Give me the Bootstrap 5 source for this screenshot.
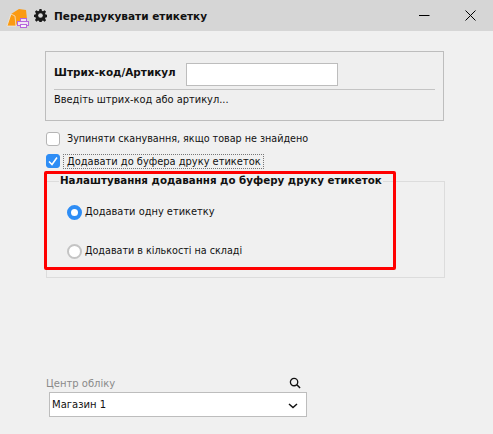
<!DOCTYPE html>
<html lang="uk">
<head>
<meta charset="utf-8">
<title>Передрукувати етикетку</title>
<link rel="stylesheet" href="https://cdn.jsdelivr.net/npm/bootstrap@5.3.0/dist/css/bootstrap.min.css">
<style>
html,body{height:100%;}
body{width:493px;height:434px;overflow:hidden;background:#f0f0f0;color:#111;font-family:"DejaVu Sans","Liberation Sans",sans-serif;font-size:10px;line-height:14px;position:relative;}
.titlebar{height:31px;background:#d6d6d6;padding-left:6px;}
.gear-ico{margin-left:5px;}
.titlebar-name{font-weight:700;font-size:10.5px;margin-left:7px;}
.win-btns{margin-left:auto;padding-right:17px;gap:35px;}
.content{padding:20px 49px 0 45px;}
.scan-box{height:70px;border:1px solid #bdbdbd;padding:11px 8px 0 8px;background:#efefef;}
.scan-label{font-weight:700;font-size:10.45px;width:132px;margin-bottom:6px;white-space:nowrap;}
.scan-input{width:152px;height:23px;border:1px solid #bdbdbd;background:#fff;}
.scan-rule{height:1px;background:#c4c4c4;margin:3px 0 3px;}
.scan-hint{font-size:9.85px;}
.chk-row{height:22px;margin-left:1px;gap:7px;}
.first-chk{margin-top:7px;}
.first-text{font-size:9.6px;}
.chk{width:14px;height:14px;border:1px solid #b5b5b5;border-radius:3px;background:#fff;flex:none;}
.chk-on{background:#2e8df5;border-color:#2e8df5;}
.focus-text{border:1px dotted #777;padding:0 2px 0 3px;margin-left:-4px;line-height:13px;font-size:9.9px;white-space:nowrap;}
.opts-box{position:relative;height:97px;margin:9px -1px 0 1px;border:1px solid #dcdcdc;padding:15px 0 0 20px;}
.opts-title{position:absolute;top:-9px;left:12px;padding:0 1px;background:#f0f0f0;font-weight:700;font-size:10.3px;white-space:nowrap;}
.radio-row{height:14px;gap:3px;}
.radio-row+.radio-row{margin-top:25px;}
.radio-first{font-size:9.85px;}
.radio-second{font-size:9.6px;}
.radio-mark{width:15px;height:15px;border-radius:50%;flex:none;border:2px solid #c4c4c4;background:#fff;}
.radio-on{border:4px solid #2e8df5;background:#fff;}
.red-frame{position:absolute;left:44px;top:171px;width:352px;height:99px;border:3px solid #f00;border-radius:2px;pointer-events:none;}
.store-wrap{position:absolute;left:46px;top:377px;width:261px;}
.store-label{color:#8a8a8a;}
.search-ico{margin-left:auto;margin-right:6px;margin-top:-2px;}
.store-select{margin:1px 0 0 3px;height:25px;border:1px solid #bdbdbd;background:#fff;padding:0 8px 0 2px;}
.store-chev{margin-top:2px;}
</style>
</head>
<body>
<div class="titlebar d-flex align-items-center">
  <svg width="23" height="24" viewBox="6 4 23 24" aria-hidden="true">
    <path d="M11 14 19 9l7 1 1 9-7 3-4 3-2-7z" fill="#fb9a12"/>
    <path d="M7 26 11 14l4 2 1 10z" fill="#fb9a12" stroke="#f4efe6" stroke-width=".7"/>
    <rect x="20.500" y="18.500" width="6" height="4" fill="#efe3f3" stroke="#b765dc"/>
    <rect x="17.500" y="21.500" width="11" height="4" fill="#efe3f3" stroke="#b765dc"/>
    <rect x="20.500" y="24.500" width="6" height="3" fill="#f7f2f9" stroke="#b765dc"/>
  </svg>
  <svg class="gear-ico" width="13" height="13" viewBox="0 0 14 14" aria-hidden="true">
    <g fill="#1a1a1a"><path d="M5.900 0h2.200l.4 2 1.200.5 1.700-1.100 1.600 1.600-1.100 1.700.5 1.200 2 .4v2.400l-2 .4-.5 1.200 1.100 1.700-1.600 1.600-1.700-1.100-1.200.5-.4 2H5.900l-.4-2-1.200-.5-1.700 1.100L1 11.900l1.100-1.700-.5-1.200-2-.4V6.200l2-.4.500-1.200L1 2.900 2.600 1.300l1.700 1.100 1.200-.5z"/></g>
    <circle cx="7" cy="7" r="2.500" fill="#d6d6d6"/>
  </svg>
  <span class="titlebar-name">Передрукувати етикетку</span>
  <div class="win-btns d-flex align-items-center">
    <svg width="11" height="11" viewBox="0 0 11 11" aria-hidden="true"><path d="M0 5.500h10.500" stroke="#000" stroke-width="1"/></svg>
    <svg width="11" height="11" viewBox="0 0 11 11" aria-hidden="true"><path d="M.5.500l10 10M10.500.500l-10 10" stroke="#000" stroke-width="1"/></svg>
  </div>
</div>
<div class="content">
  <div class="scan-box">
    <div class="d-flex align-items-center">
      <span class="scan-label">Штрих-код/Артикул</span>
      <div class="scan-input"></div>
    </div>
    <div class="scan-rule"></div>
    <div class="scan-hint">Введіть штрих-код або артикул...</div>
  </div>
  <div class="chk-row first-chk d-flex align-items-center">
    <span class="chk"></span><span class="first-text">Зупиняти сканування, якщо товар не знайдено</span>
  </div>
  <div class="chk-row d-flex align-items-center">
    <span class="chk chk-on d-flex align-items-center justify-content-center">
      <svg width="10" height="10" viewBox="0 0 10 10" aria-hidden="true"><path d="M1 5.500 4 8.500 9 1.500" fill="none" stroke="#fff" stroke-width="1.500"/></svg>
    </span><span class="focus-text">Додавати до буфера друку етикеток</span>
  </div>
  <div class="opts-box">
    <div class="opts-title">Налаштування додавання до буферу друку етикеток</div>
    <div class="radio-row radio-first d-flex align-items-center mt-2"><span class="radio-mark radio-on"></span><span>Додавати одну етикетку</span></div>
    <div class="radio-row radio-second d-flex align-items-center"><span class="radio-mark"></span><span>Додавати в кількості на складі</span></div>
  </div>
</div>
<div class="red-frame"></div>
<div class="store-wrap">
  <div class="d-flex align-items-center">
    <span class="store-label">Центр обліку</span>
    <svg class="search-ico" width="12" height="12" viewBox="0 0 13 13" aria-hidden="true"><circle cx="5.500" cy="5.500" r="4" fill="none" stroke="#111" stroke-width="1.400"/><path d="M8.500 8.500 12 12" stroke="#111" stroke-width="1.600"/></svg>
  </div>
  <div class="store-select d-flex align-items-center justify-content-between">
    <span>Магазин 1</span>
    <svg class="store-chev" width="10" height="6" viewBox="0 0 10 6" aria-hidden="true"><path d="M1 1l4 3.500L9 1" fill="none" stroke="#111" stroke-width="1.500"/></svg>
  </div>
</div>
<script src="https://cdn.jsdelivr.net/npm/bootstrap@5.3.0/dist/js/bootstrap.bundle.min.js"></script>
</body>
</html>
